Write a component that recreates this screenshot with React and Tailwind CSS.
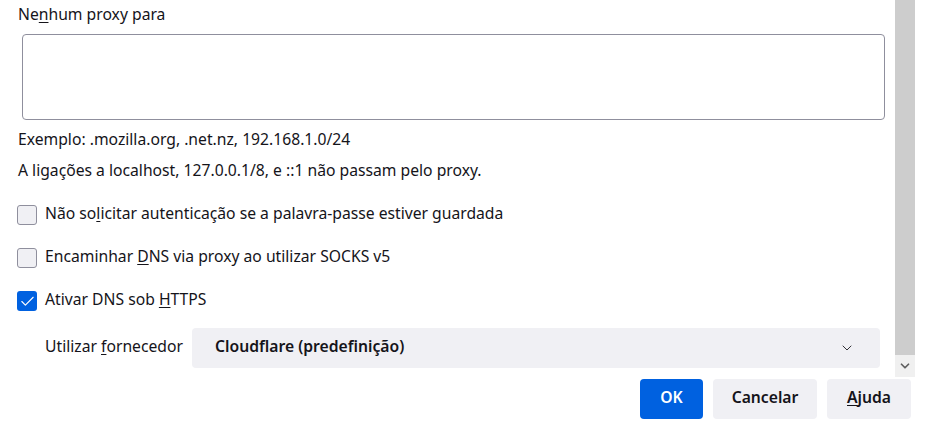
import { Check, ChevronDown } from 'lucide-react'

function Checkbox({ checked, children }) {
  return (
    <label className="flex items-center gap-[8px] h-[20px]">
      {checked ? (
        <span className="w-[20px] h-[20px] rounded-[3px] bg-[#0061e0] flex items-center justify-center">
          <Check size={17} strokeWidth={1.6} className="text-white" />
        </span>
      ) : (
        <span className="w-[20px] h-[20px] rounded-[3px] bg-[#f0f0f4] border border-[#8f8f9d]" />
      )}
      <span className="-mt-[2px]">{children}</span>
    </label>
  )
}

export default function App() {
  return (
    <div className="w-[925px] h-[424px] bg-white text-[15.7px] text-[#15141a] font-['Noto_Sans',sans-serif] flex overflow-hidden">
      {/* Main */}
      <div className="w-[895px] flex flex-col">
        <div className="pl-[18px] pt-[3px] leading-[22px]">
          Ne<u className="underline-offset-2">n</u>hum proxy para
        </div>
        <div className="ml-[22px] mr-[10px] mt-[9px] h-[86px] border border-[#8f8f9d] rounded-[4px]" />
        <div className="pl-[18px] mt-[8px] leading-[22px]">Exemplo: .mozilla.org, .net.nz, 192.168.1.0/24</div>
        <div className="pl-[18px] mt-[9px] leading-[22px]">A ligações a localhost, 127.0.0.1/8, e ::1 não passam pelo proxy.</div>
        <div className="pl-[17px] mt-[24px] flex flex-col gap-[23px]">
          <Checkbox>Não so<u className="underline-offset-2">l</u>icitar autenticação se a palavra-passe estiver guardada</Checkbox>
          <Checkbox>Encaminhar <u className="underline-offset-2">D</u>NS via proxy ao utilizar SOCKS v5</Checkbox>
          <Checkbox checked>Ativar DNS sob <u className="underline-offset-2">H</u>TTPS</Checkbox>
        </div>
        <div className="flex items-center mt-[17px] pl-[45px] pr-[15px]">
          <span className="w-[147px] -mt-[2px]">Utilizar <u className="underline-offset-2">f</u>ornecedor</span>
          <div className="flex-1 h-[40px] rounded-[4px] bg-[#f0f0f4] flex items-center justify-between pl-[23px] pr-[25px] font-semibold">
            <span className="-mt-[2px]">Cloudflare (predefinição)</span>
            <ChevronDown size={16} strokeWidth={1.3} className="text-[#15141a]" />
          </div>
        </div>
        <div className="flex justify-end gap-[10px] mt-[11px] mr-[-16px]">
          <button className="w-[63px] h-[40px] rounded-[4px] bg-[#0061e0] text-white font-semibold pb-[2px]">OK</button>
          <button className="w-[104px] h-[40px] rounded-[4px] bg-[#f0f0f4] font-semibold pb-[2px]">Cancelar</button>
          <button className="w-[84px] h-[40px] rounded-[4px] bg-[#f0f0f4] font-semibold pb-[2px]">
            <u className="underline-offset-2">A</u>juda
          </button>
        </div>
      </div>
      {/* Scrollbar */}
      <div className="w-[20px] h-[377px] flex flex-col">
        <div className="flex-1 bg-[#cdcdcd]" />
        <div className="h-[22px] bg-[#f0f0f0] flex items-center justify-center">
          <ChevronDown size={14} strokeWidth={3} className="text-[#606060]" />
        </div>
      </div>
    </div>
  )
}
